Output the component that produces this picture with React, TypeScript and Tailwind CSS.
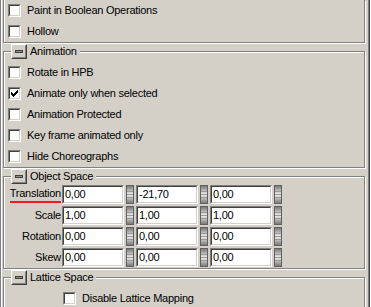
import type { ReactNode } from "react";

const bg = "bg-[#d4d0c8]";

function Sunken({ className, children }: { className: string; children?: ReactNode }) {
  return (
    <div className={`border border-t-[#808080] border-l-[#808080] border-b-white border-r-white ${className}`}>
      <div className="h-full w-full border border-t-[#404040] border-l-[#404040] border-b-[#d4d0c8] border-r-[#d4d0c8] bg-white">
        {children}
      </div>
    </div>
  );
}

function CheckMark() {
  const ys = [2, 3, 4, 3, 2, 1, 0];
  return (
    <svg width="9" height="9" viewBox="0 0 9 9" shapeRendering="crispEdges" className="block">
      {ys.map((y, i) => (
        <rect key={i} x={i + 1} y={y + 1} width="1" height="3" fill="#000" />
      ))}
    </svg>
  );
}

function Check({ label, checked = false }: { label: string; checked?: boolean }) {
  return (
    <div className="flex h-[21px] items-center">
      <Sunken className="h-[13px] w-[13px] shrink-0">{checked && <CheckMark />}</Sunken>
      <span className="ml-[6px] whitespace-nowrap">{label}</span>
    </div>
  );
}

function MinusButton() {
  return (
    <div className="h-[15px] w-[16px] border border-t-white border-l-white border-b-[#404040] border-r-[#404040]">
      <div className={`flex h-full w-full items-center justify-center border border-t-[#d4d0c8] border-l-[#d4d0c8] border-b-[#808080] border-r-[#808080] ${bg}`}>
        <div className="h-[3px] w-[8px] border border-[#404040] bg-[#909090]" />
      </div>
    </div>
  );
}

function Group({ title, first, children, className = "" }: { title?: string; first?: boolean; children: ReactNode; className?: string }) {
  return (
    <div
      className={`relative border-[#808080] ${
        first
          ? "border-r border-b shadow-[inset_1px_0_0_#fff,1px_1px_0_#fff] border-l"
          : "border shadow-[inset_1px_1px_0_#fff,1px_1px_0_#fff]"
      } ${className}`}
    >
      {title && (
        <div className={`absolute left-[7px] top-[-8px] flex items-center pr-[3px] ${bg}`}>
          <MinusButton />
          <span className="ml-[3px] leading-[15px]">{title}</span>
        </div>
      )}
      {children}
    </div>
  );
}

function Grip() {
  const lines = [3, 6, 9, 12, 15];
  return (
    <svg width="8" height="19" viewBox="0 0 8 19" shapeRendering="crispEdges" className="block shrink-0">
      <defs>
        <linearGradient id="grip" x1="0" y1="0" x2="0" y2="1">
          <stop offset="0" stopColor="#7a7a7a" />
          <stop offset="0.5" stopColor="#f0f0f0" />
          <stop offset="1" stopColor="#7a7a7a" />
        </linearGradient>
      </defs>
      <rect x="0" y="0" width="8" height="19" fill="#606060" />
      <rect x="1" y="1" width="6" height="17" fill="url(#grip)" />
      {lines.map((y) => (
        <rect key={y} x="1" y={y} width="6" height="1" fill="#9a9a9a" />
      ))}
    </svg>
  );
}

function Field({ value }: { value: string }) {
  return (
    <Sunken className="h-[19px] w-[62px] shrink-0">
      <div className="pl-[1px] leading-[15px]">{value}</div>
    </Sunken>
  );
}

function VectorRow({ label, values, underline }: { label: string; values: string[]; underline?: boolean }) {
  return (
    <div className="flex h-[21px] items-center">
      <div className="flex w-[57px] justify-end">
        {underline ? (
          <div className="flex flex-col items-stretch">
            <span className="leading-[13px]">{label}</span>
            <div className="mt-[1px] h-[2px] bg-[#ee1c1c]" />
          </div>
        ) : (
          <span>{label}</span>
        )}
      </div>
      <div className="ml-[1px] flex items-center">
        {values.map((v, i) => (
          <div key={i} className={`flex items-center ${i > 0 ? "ml-[2px]" : ""}`}>
            <Field value={v} />
            <div className="ml-[2px]">
              <Grip />
            </div>
          </div>
        ))}
      </div>
    </div>
  );
}

export default function App() {
  return (
    <div
      className={`flex h-[307px] w-[371px] overflow-hidden ${bg} text-[11px] tracking-[-0.25px] text-black font-['Liberation_Sans',Arial,sans-serif]`}
    >
      <div className="w-px shrink-0 bg-[#808080]" />
      <div className="w-px shrink-0 bg-white" />
      <div className="flex w-[365px] shrink-0 flex-col pl-px pr-[2px]">
        <Group first className="pl-[4px]">
          <Check label="Paint in Boolean Operations" />
          <Check label="Hollow" />
        </Group>

        <Group title="Animation" className="mt-[8px] pl-[4px] pt-[10px]">
          <Check label="Rotate in HPB" />
          <Check label="Animate only when selected" checked />
          <Check label="Animation Protected" />
          <Check label="Key frame animated only" />
          <Check label="Hide Choreographs" />
        </Group>

        <Group title="Object Space" className="mt-[8px] pt-[7px]">
          <VectorRow label="Translation" values={["0,00", "-21,70", "0,00"]} underline />
          <VectorRow label="Scale" values={["1,00", "1,00", "1,00"]} />
          <VectorRow label="Rotation" values={["0,00", "0,00", "0,00"]} />
          <VectorRow label="Skew" values={["0,00", "0,00", "0,00"]} />
        </Group>

        <Group title="Lattice Space" className="mt-[8px] pl-[59px] pt-[10px]">
          <Check label="Disable Lattice Mapping" />
          <div className="h-[20px]" />
        </Group>
      </div>
      <div className="w-px shrink-0" />
      <div className="w-px shrink-0 bg-[#808080]" />
      <div className="w-px shrink-0 bg-[#404040]" />
      <div className="w-px shrink-0 bg-white" />
    </div>
  );
}
